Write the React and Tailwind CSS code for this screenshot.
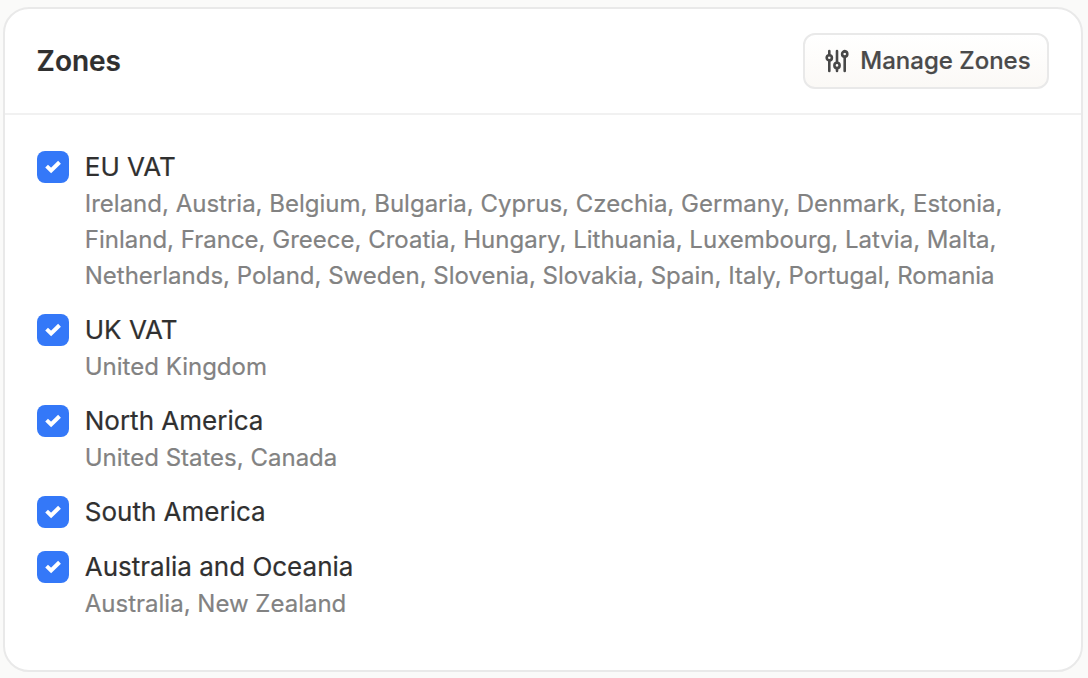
const zones = [
  { name: 'EU VAT', lines: ['Ireland, Austria, Belgium, Bulgaria, Cyprus, Czechia, Germany, Denmark, Estonia,', 'Finland, France, Greece, Croatia, Hungary, Lithuania, Luxembourg, Latvia, Malta,', 'Netherlands, Poland, Sweden, Slovenia, Slovakia, Spain, Italy, Portugal, Romania'] },
  { name: 'UK VAT', lines: ['United Kingdom'] },
  { name: 'North America', lines: ['United States, Canada'] },
  { name: 'South America', lines: [] },
  { name: 'Australia and Oceania', lines: ['Australia, New Zealand'] },
];

function Checkbox() {
  return (
    <span role="checkbox" aria-checked="true" className="mt-[3px] flex size-8 shrink-0 items-center justify-center rounded-lg bg-[#3478f8]">
      <svg viewBox="0 0 32 32" className="size-8" fill="none" stroke="white" strokeWidth="4">
        <path d="M9.6 15.1 14.1 19.4 22.5 11.2" />
      </svg>
    </span>
  );
}

function SlidersIcon() {
  return (
    <svg viewBox="0 0 24 24" className="size-6 shrink-0" fill="none" stroke="#484848" strokeWidth="2.6" strokeLinecap="round">
      <path d="M4.3 2v4M4.3 11.5V22M12 2v11.5M12 19v3M19.7 2v.5M19.7 8v14" />
      <circle cx="4.3" cy="8.8" r="2.6" />
      <circle cx="12" cy="16.4" r="2.6" />
      <circle cx="19.7" cy="5" r="2.6" />
    </svg>
  );
}

export default function App() {
  return (
    <main className="h-[678px] w-[1088px] overflow-hidden bg-[#fafaf9] pt-[7px] pl-[3px] font-['Inter',sans-serif]">
      <section className="h-[665px] w-[1080px] rounded-[26px] border-2 border-[#e9e9e9] bg-white">
        <header className="flex h-[106px] items-center justify-between border-b-2 border-[#f1f1f1] pr-8 pl-8">
          <h1 className="-ml-[0.4px] text-[28px] font-semibold text-[#303030] [-webkit-text-stroke:0.2px_#303030]">Zones</h1>
          <button className="flex h-14 w-[246px] items-center gap-[11.3px] rounded-xl border-2 border-[#e9e9e9] bg-linear-to-b from-white to-[#fbf9f6] pl-5 text-2xl font-medium whitespace-nowrap text-[#4a4a4a] [-webkit-text-stroke:0.2px_#4a4a4a]">
            <SlidersIcon />
            Manage Zones
          </button>
        </header>
        <ul className="flex flex-col gap-[17px] pt-[33px] pl-8">
          {zones.map((zone) => (
            <li key={zone.name} className="flex gap-[15.75px]">
              <Checkbox />
              <div className="whitespace-nowrap">
                <h2 className="h-[38px] text-[26px] leading-[37px] text-[#303030] [-webkit-text-stroke:0.2px_#303030]">{zone.name}</h2>
                {zone.lines.map((line) => (
                  <p key={line} className="text-2xl leading-9 text-[#828282] [-webkit-text-stroke:0.2px_#828282]">{line}</p>
                ))}
              </div>
            </li>
          ))}
        </ul>
      </section>
    </main>
  );
}
